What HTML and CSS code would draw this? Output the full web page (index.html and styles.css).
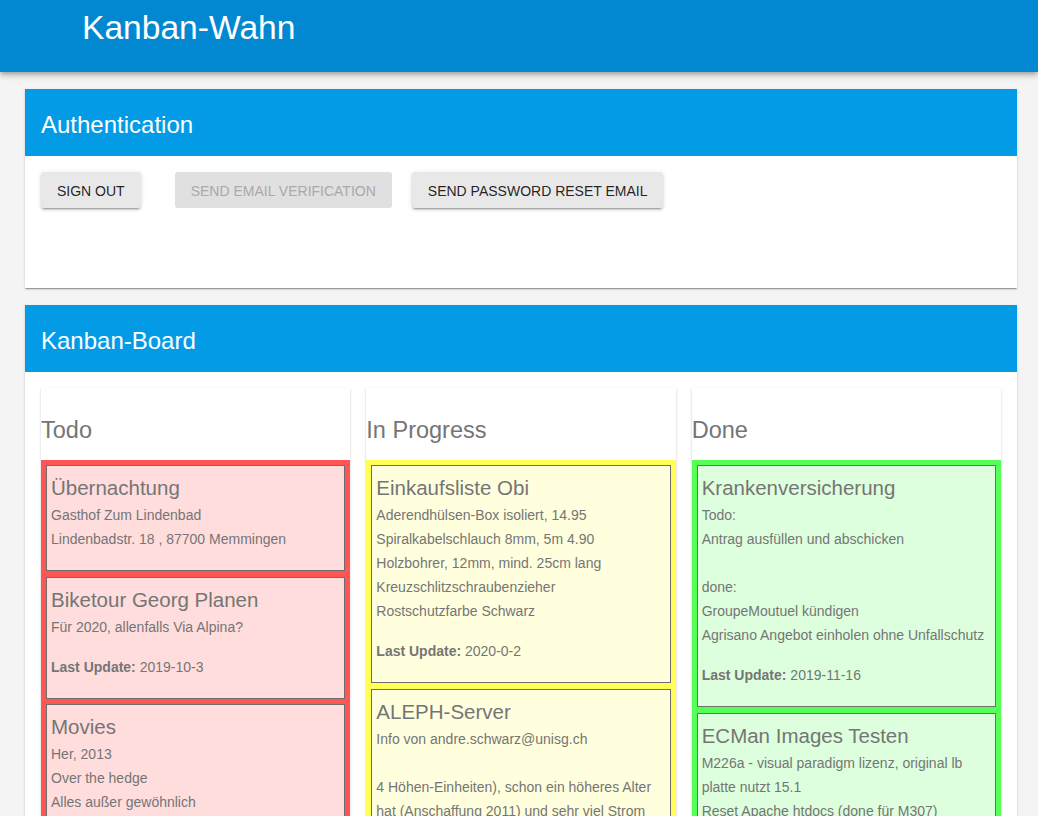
FILE: index.html
```html
<!DOCTYPE html>
<html lang="de">
<head>
<meta charset="utf-8">
<title>Kanban-Wahn</title>
<link rel="stylesheet" href="styles.css">
</head>
<body>
<header class="appbar">
  <h1 class="app-title">Kanban-Wahn</h1>
</header>
<main class="main">
  <section class="card auth-card">
    <div class="card-header"><h2 class="card-title">Authentication</h2></div>
    <div class="card-body auth-body">
      <button class="btn btn-signout">SIGN OUT</button>
      <button class="btn btn-disabled" disabled>SEND EMAIL VERIFICATION</button>
      <button class="btn">SEND PASSWORD RESET EMAIL</button>
    </div>
  </section>

  <section class="card board-card">
    <div class="card-header"><h2 class="card-title">Kanban-Board</h2></div>
    <div class="card-body board">
      <div class="column">
        <h3 class="column-title">Todo</h3>
        <div class="lane lane-todo">
          <article class="task">
            <h4 class="task-title">Übernachtung</h4>
            <div class="line">Gasthof Zum Lindenbad</div>
            <div class="line">Lindenbadstr. 18 , 87700 Memmingen</div>
          </article>
          <article class="task">
            <h4 class="task-title">Biketour Georg Planen</h4>
            <div class="line">Für 2020, allenfalls Via Alpina?</div>
            <p class="updated"><b>Last Update:</b> 2019-10-3</p>
          </article>
          <article class="task">
            <h4 class="task-title">Movies</h4>
            <div class="line">Her, 2013</div>
            <div class="line">Over the hedge</div>
            <div class="line">Alles außer gewöhnlich</div>
            <p class="updated"><b>Last Update:</b> 2019-12-1</p>
          </article>
        </div>
      </div>

      <div class="column">
        <h3 class="column-title">In Progress</h3>
        <div class="lane lane-progress">
          <article class="task">
            <h4 class="task-title">Einkaufsliste Obi</h4>
            <div class="line">Aderendhülsen-Box isoliert, 14.95</div>
            <div class="line">Spiralkabelschlauch 8mm, 5m 4.90</div>
            <div class="line">Holzbohrer, 12mm, mind. 25cm lang</div>
            <div class="line">Kreuzschlitzschraubenzieher</div>
            <div class="line">Rostschutzfarbe Schwarz</div>
            <p class="updated"><b>Last Update:</b> 2020-0-2</p>
          </article>
          <article class="task">
            <h4 class="task-title">ALEPH-Server</h4>
            <div class="line">Info von andre.schwarz@unisg.ch</div>
            <div class="line blank"></div>
            <div class="line">4 Höhen-Einheiten), schon ein höheres Alter hat (Anschaffung 2011) und sehr viel Strom verbraucht.</div>
          </article>
        </div>
      </div>

      <div class="column">
        <h3 class="column-title">Done</h3>
        <div class="lane lane-done">
          <article class="task">
            <h4 class="task-title">Krankenversicherung</h4>
            <div class="line">Todo:</div>
            <div class="line">Antrag ausfüllen und abschicken</div>
            <div class="line blank"></div>
            <div class="line">done:</div>
            <div class="line">GroupeMoutuel kündigen</div>
            <div class="line">Agrisano Angebot einholen ohne Unfallschutz</div>
            <p class="updated"><b>Last Update:</b> 2019-11-16</p>
          </article>
          <article class="task">
            <h4 class="task-title">ECMan Images Testen</h4>
            <div class="line">M226a - visual paradigm lizenz, original lb platte nutzt 15.1</div>
            <div class="line">Reset Apache htdocs (done für M307)</div>
          </article>
        </div>
      </div>
    </div>
  </section>
</main>
</body>
</html>
```
FILE: styles.css
```css
* { box-sizing: border-box; }

html, body {
  margin: 0;
  padding: 0;
}

body {
  background: #f4f4f4;
  font-family: "Liberation Sans", Arial, sans-serif;
  color: #757575;
}

.appbar {
  height: 72px;
  background: #0288d1;
  padding-left: 82px;
  box-shadow: 0 2px 4px -1px rgba(0,0,0,.2), 0 4px 5px 0 rgba(0,0,0,.14), 0 1px 10px 0 rgba(0,0,0,.12);
  position: relative;
  z-index: 2;
}

.app-title {
  margin: 0;
  font-size: 33.6px;
  font-weight: 400;
  line-height: 56px;
  color: #fff;
}

.main {
  padding: 17px 21px 0 25px;
}

.card {
  background: #fff;
  box-shadow: 0 2px 1px -1px rgba(0,0,0,.2), 0 1px 1px 0 rgba(0,0,0,.14), 0 1px 3px 0 rgba(0,0,0,.12);
  margin-bottom: 17px;
}

.card-header {
  background: #039be5;
  height: 67px;
  padding: 20px 16px 15px;
}

.card-title {
  margin: 0;
  font-size: 24px;
  font-weight: 400;
  line-height: 32px;
  color: #fff;
}

.card-body {
  padding: 16px;
}

.auth-body {
  display: flex;
  align-items: flex-start;
  padding-bottom: 80px;
}

.btn {
  height: 36px;
  padding: 2px 16px 0;
  border: 0;
  border-radius: 3px;
  background: #e8e8e8;
  color: rgba(0,0,0,.87);
  font-family: "Liberation Sans", Arial, sans-serif;
  font-size: 14px;
  line-height: 34px;
  box-shadow: 0 3px 1px -2px rgba(0,0,0,.2), 0 2px 2px 0 rgba(0,0,0,.14), 0 1px 5px 0 rgba(0,0,0,.12);
}

.btn-signout { margin-right: 34px; }

.btn-disabled {
  background: #e0e0e0;
  color: #a9a9a9;
  box-shadow: none;
  margin-right: 20px;
}

.board {
  display: grid;
  grid-template-columns: repeat(3, 1fr);
  gap: 16px;
  align-items: start;
}

.column {
  background: #fff;
  box-shadow: 0 2px 1px -1px rgba(0,0,0,.2), 0 1px 1px 0 rgba(0,0,0,.14), 0 1px 3px 0 rgba(0,0,0,.12);
}

.column-title {
  margin: 0;
  padding: 26px 0 14px;
  font-size: 23.5px;
  font-weight: 400;
  line-height: 32px;
  color: #757575;
}

.lane {
  display: flex;
  flex-direction: column;
  gap: 5.5px;
  padding: 5px;
}

.lane-todo { background: #ff5555; }
.lane-progress { background: #ffff55; }
.lane-done { background: #55ff55; }

.task {
  border: 1px solid #6e6e6e;
  padding: 6px 4px 19px;
}

.lane-todo .task { background: #ffdddd; }
.lane-progress .task { background: #ffffdd; }
.lane-done .task { background: #ddffdd; }

.task-title {
  margin: 0;
  font-size: 20.5px;
  font-weight: 400;
  line-height: 31px;
  color: #757575;
}

.line {
  font-size: 14px;
  line-height: 24px;
}

.blank { height: 24px; }

.updated {
  margin: 16px 0 0;
  font-size: 14px;
  line-height: 24px;
}

.updated b { font-weight: 700; }
```
